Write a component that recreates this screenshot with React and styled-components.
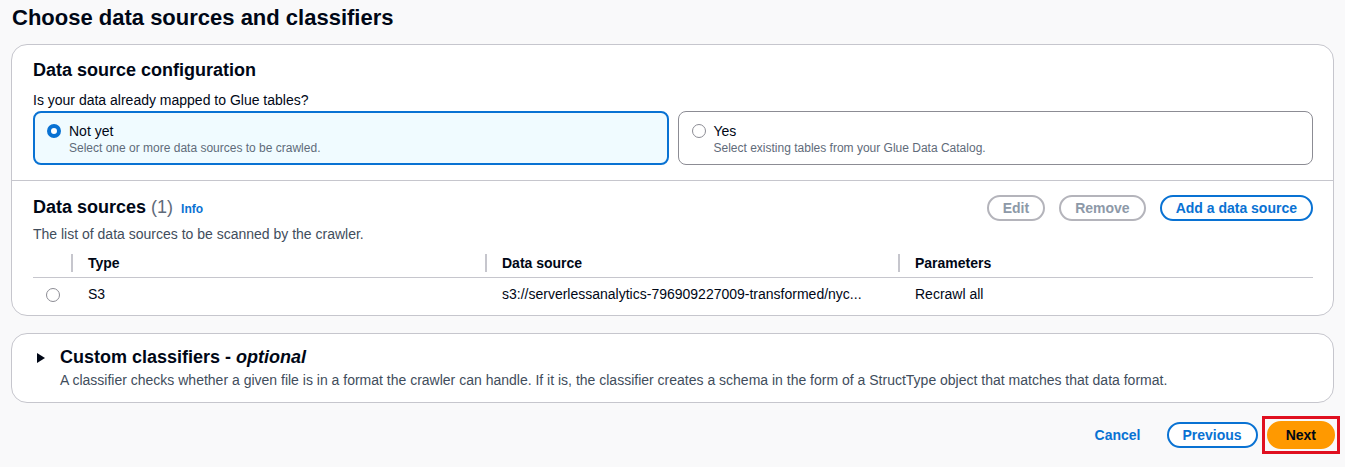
import React from 'react';
import styled, { createGlobalStyle, css } from 'styled-components';

const GlobalStyle = createGlobalStyle`
  body {
    margin: 0;
    background: #f9f9fa;
    font-family: "Liberation Sans", Arial, sans-serif;
    color: #000716;
  }
`;

const Page = styled.div`
  padding: 4px 11px 0 11px;
  height: 467px;
  box-sizing: border-box;
  overflow: hidden;
`;

const PageTitle = styled.h1`
  margin: 0 0 12px 1px;
  font-size: 22px;
  line-height: 28px;
  font-weight: 700;
`;

const Container = styled.section`
  background: #fff;
  border: 1px solid #c6c6cd;
  border-radius: 16px;
  margin-bottom: ${p => p.$gap || '17px'};
`;

const Section = styled.div`
  padding: ${p => p.$pad || '14px 20px 15px 21px'};
  border-bottom: ${p => (p.$divider ? '1px solid #c6c6cd' : 'none')};
`;

const Heading = styled.h2`
  margin: 0;
  font-size: 18px;
  line-height: 22px;
  font-weight: 700;
  display: flex;
  align-items: baseline;
  gap: 5px;
`;

const Count = styled.span`
  font-weight: 400;
  color: #5f6b7a;
`;

const InfoLink = styled.a`
  font-size: 12px;
  font-weight: 700;
  color: #0972d3;
  margin-left: 3px;
`;

const Label = styled.div`
  margin: 10px 0 2px;
  font-size: 14px;
  line-height: 18px;
`;

const TileGrid = styled.div`
  display: grid;
  grid-template-columns: 1fr 1fr;
  gap: 9px;
`;

const Tile = styled.div`
  display: flex;
  gap: 8px;
  border-radius: 8px;
  box-sizing: border-box;
  height: 54px;
  ${p =>
    p.$selected
      ? css`
          border: 2px solid #0972d3;
          background: #f0fbff;
          padding: 9px 12px;
        `
      : css`
          border: 1px solid #8c8c94;
          background: #fff;
          padding: 10px 13px;
        `}
`;

const Radio = styled.span`
  flex: none;
  width: 14px;
  height: 14px;
  border-radius: 50%;
  box-sizing: border-box;
  margin-top: 2px;
  ${p =>
    p.$checked
      ? css`
          border: 4px solid #0972d3;
          background: #fff;
        `
      : css`
          border: 1px solid #8c8c94;
          background: #fff;
        `}
`;

const TileText = styled.div`
  display: flex;
  flex-direction: column;
`;

const TileTitle = styled.span`
  font-size: 14px;
  line-height: 18px;
`;

const TileDesc = styled.span`
  font-size: 12px;
  line-height: 16px;
  color: #5f6b7a;
`;

const HeaderRow = styled.div`
  display: flex;
  justify-content: space-between;
  align-items: center;
`;

const Actions = styled.div`
  display: flex;
  gap: 14px;
`;

const Button = styled.button`
  font-family: inherit;
  font-size: 14px;
  font-weight: 700;
  line-height: 18px;
  border-radius: 20px;
  padding: 2px 14px;
  background: #fff;
  cursor: pointer;
  border: 2px solid ${p => (p.$disabled ? '#b4b4bb' : '#0972d3')};
  color: ${p => (p.$disabled ? '#8d99a8' : '#0972d3')};
`;

const Desc = styled.p`
  margin: ${p => p.$mt || '4px'} 0 0;
  font-size: 14px;
  line-height: 20px;
  color: ${p => p.$color || '#000716'};
`;

const Table = styled.div`
  margin-top: 5px;
`;

const Row = styled.div`
  display: grid;
  grid-template-columns: 38px 414px 413px 1fr;
  align-items: center;
  height: ${p => (p.$head ? '28px' : '32px')};
  border-bottom: ${p => (p.$head ? '1px solid #c6c6cd' : 'none')};
  font-size: 14px;
  font-weight: ${p => (p.$head ? 700 : 400)};
`;

const Cell = styled.div`
  display: flex;
  align-items: center;
  height: 100%;
  padding-left: 17px;
  white-space: nowrap;
  overflow: hidden;
  ${p =>
    p.$sep &&
    css`
      position: relative;
      &::before {
        content: '';
        position: absolute;
        left: 0;
        top: 5px;
        bottom: 5px;
        width: 2px;
        background: #c6c6cd;
      }
    `}
`;

const RadioCell = styled.div`
  display: flex;
  justify-content: center;
  padding-left: 2px;
`;

const Expander = styled.div`
  display: flex;
  gap: 14px;
  padding: 12px 20px 12px 24px;
`;

const Caret = styled.svg`
  flex: none;
  margin-top: 7px;
`;

const Footer = styled.div`
  display: flex;
  justify-content: flex-end;
  align-items: center;
  gap: 4px;
`;

const LinkButton = styled.button`
  font-family: inherit;
  font-size: 14px;
  font-weight: 700;
  color: #0972d3;
  background: none;
  border: none;
  padding: 4px 8px;
  margin-right: 14px;
`;

const Highlight = styled.div`
  border: 3px solid #e01020;
  padding: 2px;
  margin-right: -6px;
  display: flex;
`;

const PrimaryButton = styled(Button)`
  background: #ff9900;
  border-color: #ff9900;
  color: #000716;
  padding: 3px 17px;
`;

export default function App() {
  return (
    <>
      <GlobalStyle />
      <Page>
        <PageTitle>Choose data sources and classifiers</PageTitle>

        <Container>
          <Section $divider>
            <Heading>Data source configuration</Heading>
            <Label>Is your data already mapped to Glue tables?</Label>
            <TileGrid>
              <Tile $selected>
                <Radio $checked />
                <TileText>
                  <TileTitle>Not yet</TileTitle>
                  <TileDesc>Select one or more data sources to be crawled.</TileDesc>
                </TileText>
              </Tile>
              <Tile>
                <Radio />
                <TileText>
                  <TileTitle>Yes</TileTitle>
                  <TileDesc>Select existing tables from your Glue Data Catalog.</TileDesc>
                </TileText>
              </Tile>
            </TileGrid>
          </Section>

          <Section $pad="14px 20px 5px 21px">
            <HeaderRow>
              <Heading>
                Data sources <Count>(1)</Count>
                <InfoLink>Info</InfoLink>
              </Heading>
              <Actions>
                <Button $disabled>Edit</Button>
                <Button $disabled>Remove</Button>
                <Button>Add a data source</Button>
              </Actions>
            </HeaderRow>
            <Desc $color="#414d5c" $mt="3px">The list of data sources to be scanned by the crawler.</Desc>
            <Table>
              <Row $head>
                <div />
                <Cell $sep>Type</Cell>
                <Cell $sep>Data source</Cell>
                <Cell $sep>Parameters</Cell>
              </Row>
              <Row>
                <RadioCell>
                  <Radio />
                </RadioCell>
                <Cell>S3</Cell>
                <Cell>s3://serverlessanalytics-796909227009-transformed/nyc...</Cell>
                <Cell>Recrawl all</Cell>
              </Row>
            </Table>
          </Section>
        </Container>

        <Container $gap="13px">
          <Expander>
            <Caret width="10" height="10" viewBox="0 0 10 10">
              <path d="M1 0 L9 5 L1 10 Z" fill="#000716" />
            </Caret>
            <div>
              <Heading>
                Custom classifiers - <i>optional</i>
              </Heading>
              <Desc $color="#414d5c" $mt="2px">
                A classifier checks whether a given file is in a format the crawler can handle. If it is, the classifier creates a schema in the form of a StructType object that matches that data format.
              </Desc>
            </div>
          </Expander>
        </Container>

        <Footer>
          <LinkButton>Cancel</LinkButton>
          <Button>Previous</Button>
          <Highlight>
            <PrimaryButton>Next</PrimaryButton>
          </Highlight>
        </Footer>
      </Page>
    </>
  );
}
